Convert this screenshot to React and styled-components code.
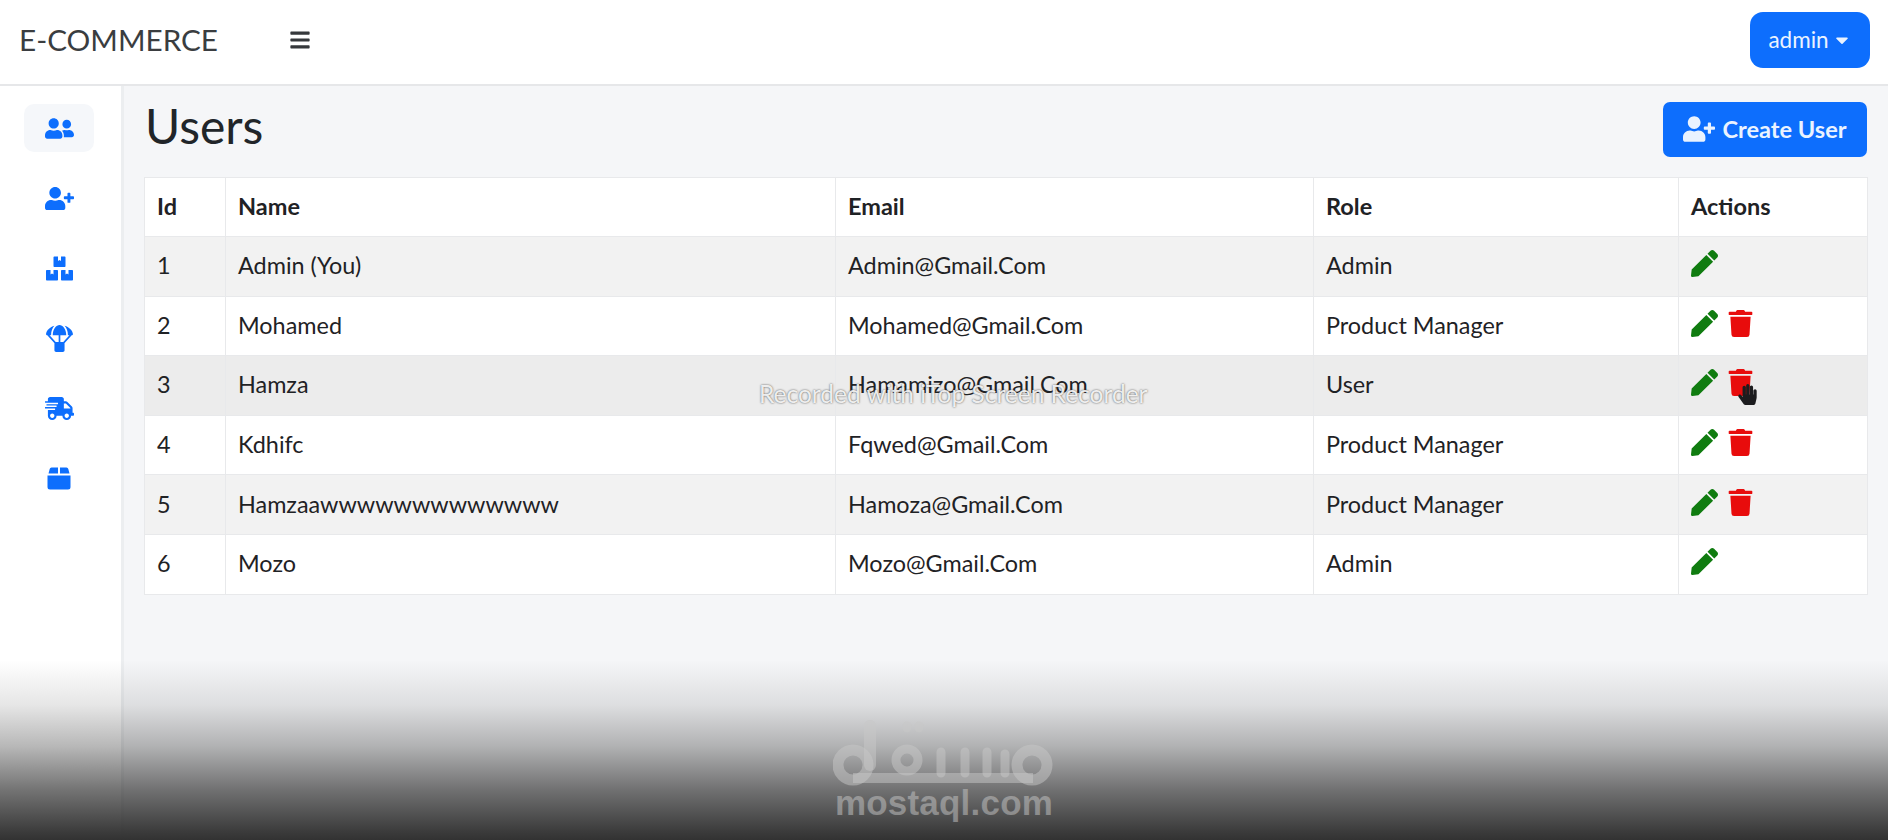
import React from "react";
import styled, { createGlobalStyle } from "styled-components";
import { FaBars, FaUserFriends, FaUserPlus, FaBoxes, FaParachuteBox, FaShippingFast, FaPen, FaTrash, FaHandPaper, FaCaretDown } from "react-icons/fa";

const Global = createGlobalStyle`
  html, body { margin: 0; padding: 0; width: 1888px; height: 840px; overflow: hidden; background: #f5f6f8; }
  body { font-family: Lato, "Liberation Sans", sans-serif; color: #1f2225; }
  * { box-sizing: border-box; }
`;
const Page = styled.div`position: relative; width: 1888px; height: 840px; display: flex; flex-direction: column; overflow: hidden;`;
const Navbar = styled.header`
  height: 86px; flex: none; background: #fff; border-bottom: 2px solid #e6e7e9;
  display: flex; align-items: center; padding: 0 18px 5px 19px;
`;
const Brand = styled.div`font-size: 29.7px; color: #3a3d40; width: 270px; line-height: 1;`;
const Burger = styled.div`display: flex; color: #35383b; font-size: 22px; flex: 1;`;
const AdminButton = styled.button`
  width: 120px; height: 56px; border: 0; border-radius: 13px; background: #0d6efd; color: #eaf3ff;
  font: 400 22.5px Lato, sans-serif; display: flex; align-items: center; justify-content: center; gap: 3px; padding: 0;
`;
const Body = styled.div`flex: 1; display: flex; min-height: 0;`;
const Sidebar = styled.nav`
  width: 124px; flex: none; background: #fff; border-right: 3px solid #eceef0;
  display: flex; flex-direction: column; align-items: center; padding: 18px 3px 0 0;
`;
const NavItem = styled.div`
  width: 70px; height: 48px; margin-bottom: 22px; border-radius: 10px; color: #0d6efd; font-size: ${p => p.$size}px;
  display: flex; align-items: center; justify-content: center;
  background: ${p => (p.$active ? "#f5f7fa" : "transparent")};
`;
const Main = styled.main`flex: 1; padding: 14px 21px 0 20px; min-width: 0;`;
const Head = styled.div`display: flex; justify-content: space-between; align-items: center; height: 58px; margin-bottom: 19px;`;
const Title = styled.h1`margin: 0; font-size: 48px; font-weight: 400; color: #212529; line-height: 1; padding: 0 0 6px 1px;`;
const CreateButton = styled.button`
  width: 204px; height: 55px; border: 0; border-radius: 7px; background: #0d6efd; color: #eaf3ff;
  font: 700 23.6px Lato, sans-serif; display: flex; align-items: center; justify-content: center; gap: 7px; padding: 0;
  svg { font-size: 32px; }
`;
const Table = styled.table`
  width: 1723px; border-collapse: collapse; table-layout: fixed; background: #fff; font-size: 23.4px;
`;
const Th = styled.th`
  height: 59px; padding: 0 12px 2px; text-align: left; font-weight: 700; font-size: 23.5px; background: #fff;
  border: 1px solid #e8e9eb; width: ${p => p.$w}px;
`;
const Row = styled.tr`background: ${p => (p.$hover ? "#ececec" : p.$odd ? "#f2f2f2" : "#fff")};`;
const Td = styled.td`height: 59.6px; padding: 0 12px 2px; border: 1px solid #e8e9eb; white-space: nowrap;`;
const Actions = styled.div`position: relative; display: flex; align-items: center; gap: 9px; padding-bottom: 3px;`;
const Edit = styled(FaPen)`color: #107c10; font-size: 27px;`;
const Trash = styled(FaTrash)`color: #e80c0c; font-size: 27px;`;
const Cursor = styled(FaHandPaper)`position: absolute; left: 46px; top: 15px; color: #1c1c1e; font-size: 21px;`;
const Shade = styled.div`
  position: absolute; left: 0; right: 0; bottom: 0; height: 180px; pointer-events: none;
  background: linear-gradient(to bottom, rgba(50,50,50,0) 0%, rgba(50,50,50,.12) 25%, rgba(50,50,50,.35) 48%, rgba(50,50,50,.68) 72%, rgba(50,50,50,.95) 95%, rgba(50,50,50,1) 100%);
`;
const Recorded = styled.div`
  position: absolute; left: 759px; top: 379px; font-size: 24.5px; color: rgba(255,255,255,.9); white-space: nowrap;
  text-shadow: 0 0 2px rgba(50,50,50,.9); pointer-events: none;
`;
const Watermark = styled.div`
  position: absolute; left: 833px; top: 718px; width: 222px; display: flex; flex-direction: column; align-items: center; color: rgba(200,200,200,.5); pointer-events: none;
`;
const WatermarkText = styled.div`font: 700 35px "Liberation Sans", sans-serif; line-height: 35px; letter-spacing: .2px; margin-top: -5px;`;

const users = [
  [1, "Admin (You)", "Admin@Gmail.Com", "Admin", false],
  [2, "Mohamed", "Mohamed@Gmail.Com", "Product Manager", true],
  [3, "Hamza", "Hamamizo@Gmail.Com", "User", true],
  [4, "Kdhifc", "Fqwed@Gmail.Com", "Product Manager", true],
  [5, "Hamzaawwwwwwwwwwwww", "Hamoza@Gmail.Com", "Product Manager", true],
  [6, "Mozo", "Mozo@Gmail.Com", "Admin", false],
];

const LidBox = () => (
  <svg width="24" height="24" viewBox="0 0 24 24" fill="currentColor">
    <path d="M4.5 1.5h6.5v6H1.5l1.2-4.4A2 2 0 0 1 4.5 1.5zM13 1.5h6.5a2 2 0 0 1 1.8 1.6l1.2 4.4H13zM0.5 9.5h23V21a2.5 2.5 0 0 1-2.5 2.5H3A2.5 2.5 0 0 1 .5 21z" />
  </svg>
);

const navItems = [
  [FaUserFriends, 29],
  [FaUserPlus, 29],
  [FaBoxes, 27],
  [FaParachuteBox, 27],
  [FaShippingFast, 29],
  [LidBox, 24],
];

export default function App() {
  return (
    <Page>
      <Global />
      <Navbar>
        <Brand>E-COMMERCE</Brand>
        <Burger><FaBars /></Burger>
        <AdminButton>admin <FaCaretDown size={20} /></AdminButton>
      </Navbar>
      <Body>
        <Sidebar>
          {navItems.map(([Icon, size], i) => (
            <NavItem key={i} $active={i === 0} $size={size}><Icon /></NavItem>
          ))}
        </Sidebar>
        <Main>
          <Head>
            <Title>Users</Title>
            <CreateButton><FaUserPlus /> Create User</CreateButton>
          </Head>
          <Table>
            <thead>
              <tr>
                <Th $w={81}>Id</Th>
                <Th $w={610}>Name</Th>
                <Th $w={478}>Email</Th>
                <Th $w={365}>Role</Th>
                <Th $w={189}>Actions</Th>
              </tr>
            </thead>
            <tbody>
              {users.map(([id, name, email, role, del], i) => (
                <Row key={id} $odd={i % 2 === 0} $hover={i === 2}>
                  <Td>{id}</Td>
                  <Td>{name}</Td>
                  <Td>{email}</Td>
                  <Td>{role}</Td>
                  <Td>
                    <Actions>
                      <Edit />
                      {del && <Trash />}
                      {i === 2 && <Cursor />}
                    </Actions>
                  </Td>
                </Row>
              ))}
            </tbody>
          </Table>
        </Main>
      </Body>
      <Recorded>Recorded with iTop Screen Recorder</Recorded>
      <Shade />
      <Watermark>
        <svg width="222" height="72" viewBox="0 0 222 72" fill="none" stroke="currentColor">
          <path d="M20 60 H200" strokeWidth="10" />
          <circle cx="20" cy="47" r="15" strokeWidth="11" />
          <circle cx="199" cy="47" r="15" strokeWidth="11" />
          <path d="M37 47 V8" strokeWidth="12" strokeLinecap="round" />
          <circle cx="74" cy="42" r="11" strokeWidth="9" />
          <path d="M74 8 V10 M86 8 V10" strokeWidth="9" strokeLinecap="round" />
          <path d="M108 55 V34 M132 55 V34 M154 55 V34 M172 55 V36" strokeWidth="9" strokeLinecap="round" />
        </svg>
        <WatermarkText>mostaql.com</WatermarkText>
      </Watermark>
    </Page>
  );
}
